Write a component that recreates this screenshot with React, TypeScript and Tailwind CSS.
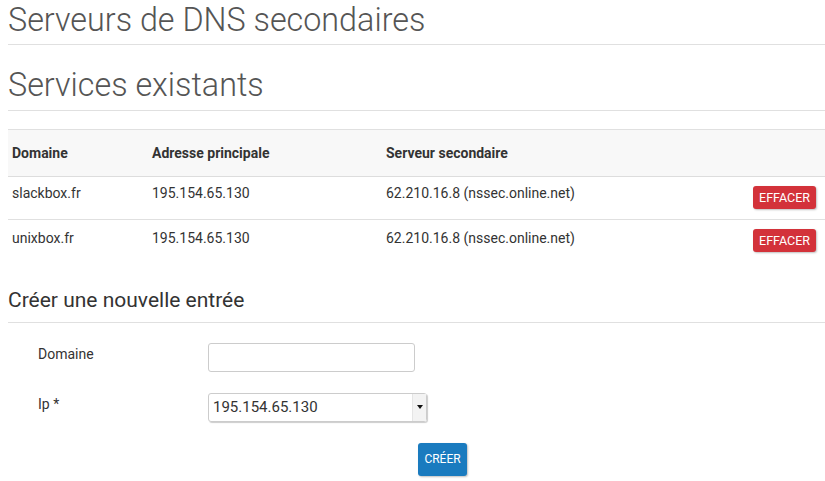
import React from "react";

const rows = [
  { d: "slackbox.fr", a: "195.154.65.130", s: "62.210.16.8 (nssec.online.net)" },
  { d: "unixbox.fr", a: "195.154.65.130", s: "62.210.16.8 (nssec.online.net)" },
];

export default function App() {
  return (
    <div className="w-[825px] h-[481px] overflow-hidden bg-white pl-2 text-[#333] text-[14px]" style={{ fontFamily: "Roboto, 'Liberation Sans', sans-serif" }}>
      <h1 className="text-[32.3px] font-light leading-[36px] text-[#555] pt-[2px] pb-[6px] border-b border-[#e0e0e0]">Serveurs de DNS secondaires</h1>
      <h2 className="mt-[22px] text-[32.3px] font-light leading-[36px] text-[#555] pb-[7px] border-b border-[#e0e0e0]">Services existants</h2>
      <table className="mt-[18px] w-full border-collapse">
        <thead>
          <tr className="bg-[#f8f8f8] border-t border-[#e0e0e0] border-b border-b-[#dddddd]">
            <th className="text-left font-bold h-[47px] pl-[4px] w-[144px]">Domaine</th>
            <th className="text-left font-bold w-[234px]">Adresse principale</th>
            <th className="text-left font-bold">Serveur secondaire</th>
            <th></th>
          </tr>
        </thead>
        <tbody>
          {rows.map((r, i) => (
            <tr key={i} className={i === 0 ? "border-b border-[#e0e0e0]" : ""}>
              <td className={`h-[43px] pl-[4px] align-top ${i === 0 ? "pt-[6px]" : "pt-[8px]"}`}>{r.d}</td>
              <td className={`align-top ${i === 0 ? "pt-[6px]" : "pt-[8px]"}`}>{r.a}</td>
              <td className={`align-top ${i === 0 ? "pt-[6px]" : "pt-[8px]"}`}>{r.s}</td>
              <td className="align-top pt-[9px] text-right pr-[9px]">
                <button className="bg-[#d3323a] text-white text-[12.5px] leading-[14px] h-[23px] px-[6px] rounded-[3px] shadow-[1px_1px_2px_rgba(0,0,0,0.25)]">EFFACER</button>
              </td>
            </tr>
          ))}
        </tbody>
      </table>
      <h3 className="mt-[25px] text-[21px] leading-[24px] text-[#333] pb-[10px] border-b border-[#e0e0e0]">Créer une nouvelle entrée</h3>
      <div className="mt-[20px] flex items-start">
        <label className="w-[200px] pl-[30px] pt-[1px]">Domaine</label>
        <input className="w-[207px] h-[29px] border border-[#cccccc] rounded-[3px] outline-none" />
      </div>
      <div className="mt-[21px] flex items-start">
        <label className="w-[200px] pl-[30px] pt-[1px]">Ip *</label>
        <div className="w-[219px] h-[29px] border border-[#cccccc] rounded-[3px] flex items-center justify-between shadow-[1px_1px_1px_rgba(0,0,0,0.2)]">
          <span className="pl-[4px] text-[15px] text-[#333]">195.154.65.130</span>
          <span className="h-full w-[14px] bg-[#f3f3f3] border-l border-[#e5e5e5] flex items-center justify-center">
            <svg width="6" height="4" viewBox="0 0 6 4"><path d="M0 0h6L3 4z" fill="#111" /></svg>
          </span>
        </div>
      </div>
      <div className="mt-[21px] pl-[410px]">
        <button className="bg-[#1a7bbf] text-white text-[12px] h-[33px] w-[49px] rounded-[3px] shadow-[1px_1px_2px_rgba(0,0,0,0.25)]">CRÉER</button>
      </div>
    </div>
  );
}
